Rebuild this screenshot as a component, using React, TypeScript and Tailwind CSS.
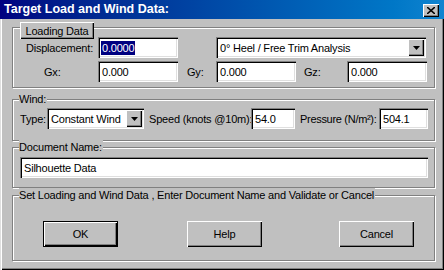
import React from "react";

const raised =
  "bg-[#c0c0c0] shadow-[inset_1px_1px_0_#ffffff,inset_-1px_-1px_0_#000000,inset_-2px_-2px_0_#808080]";
const sunken =
  "bg-white shadow-[inset_1px_1px_0_#808080,inset_2px_2px_0_#000000,inset_-1px_-1px_0_#ffffff,inset_-2px_-2px_0_#dfdfdf]";
const etched =
  "border border-[#808080] shadow-[inset_1px_1px_0_#ffffff,1px_1px_0_#ffffff]";

function Input({ value, w, selected }: { value: string; w: string; selected?: boolean }) {
  return (
    <div className={`${sunken} ${w} h-[21px] flex items-center pl-[3px] shrink-0 whitespace-nowrap`}>
      {selected ? (
        <span className="bg-[#000080] text-white leading-[14px] px-[1px]">{value}</span>
      ) : (
        <span className="leading-[14px] pl-[1px]">{value}</span>
      )}
    </div>
  );
}

function Arrow() {
  return (
    <div className={`${raised} w-[16px] h-[17px] flex items-center justify-center shrink-0`}>
      <svg width="7" height="4" viewBox="0 0 7 4">
        <path d="M0 0H7L3.5 4Z" fill="#000" />
      </svg>
    </div>
  );
}

function Select({ value, w }: { value: string; w: string }) {
  return (
    <div className={`${sunken} ${w} h-[21px] flex items-center pl-[3px] pr-[2px] shrink-0`}>
      <span className="flex-1 leading-[14px] pl-[1px] whitespace-nowrap overflow-hidden">{value}</span>
      <Arrow />
    </div>
  );
}

function Legend({ children }: { children: React.ReactNode }) {
  return (
    <div className="absolute left-[6px] top-[-8px] bg-[#c0c0c0] pr-[1px] leading-[14px] whitespace-nowrap">
      {children}
    </div>
  );
}

function Button({ label, def }: { label: string; def?: boolean }) {
  return (
    <div
      className={`${
        def
          ? "border border-black shadow-[inset_1px_1px_0_#ffffff,inset_-1px_-1px_0_#000000,inset_-2px_-2px_0_#808080]"
          : raised
      } w-[75px] h-[26px] flex items-center justify-center bg-[#c0c0c0] shrink-0`}
    >
      {label}
    </div>
  );
}

export default function App() {
  return (
    <div
      className="w-[444px] h-[270px] bg-[#c0c0c0] flex flex-col text-black text-[11px] tracking-[-0.2px] overflow-hidden"
      style={{ fontFamily: '"Liberation Sans", Arial, sans-serif' }}
    >
      {/* Title bar */}
      <div className="h-[19px] shrink-0 bg-gradient-to-r from-[#000080] to-[#1084d0] flex items-start justify-between pl-[4px] pr-[5px]">
        <span className="text-white font-bold text-[12.5px] leading-[19px] tracking-normal">
          Target Load and Wind Data:
        </span>
        <div className={`${raised} mt-[4px] w-[16px] h-[13px] flex items-center justify-center`}>
          <svg width="8" height="7" viewBox="0 0 8 7">
            <path d="M0 0L8 7M8 0L0 7" stroke="#000" strokeWidth="1.6" />
          </svg>
        </div>
      </div>

      {/* Body */}
      <div className="flex-1 flex flex-col pl-[12px] pr-[9px] shadow-[inset_1px_0_0_#dfdfdf,inset_2px_0_0_#ffffff,inset_-1px_-1px_0_#000000,inset_-2px_-2px_0_#808080]">
        {/* Loading Data group */}
        <div className={`relative mt-[8px] h-[61px] ${etched}`}>
          <div className={`${raised} absolute left-[7px] top-[-6px] w-[74px] h-[17px] flex items-center justify-center leading-[14px] whitespace-nowrap`}>
            Loading Data
          </div>
          <div className="flex flex-col gap-[3px] pt-[9px]">
            <div className="flex items-center">
              <div className="w-[85px] text-right pr-[5px] shrink-0 leading-[14px]">Displacement:</div>
              <Input value="0.0000" w="w-[80px]" selected />
              <div className="w-[38px] shrink-0" />
              <Select value="0° Heel / Free Trim Analysis" w="w-[210px]" />
            </div>
            <div className="flex items-center">
              <div className="w-[85px] pl-[31px] shrink-0 leading-[14px]">Gx:</div>
              <Input value="0.000" w="w-[80px]" />
              <div className="w-[38px] pl-[9px] shrink-0 leading-[14px]">Gy:</div>
              <Input value="0.000" w="w-[80px]" />
              <div className="w-[51px] pl-[8px] shrink-0 leading-[14px]">Gz:</div>
              <Input value="0.000" w="w-[80px]" />
            </div>
          </div>
        </div>

        {/* Wind group */}
        <div className={`relative mt-[11px] h-[42px] ${etched}`}>
          <Legend>Wind:</Legend>
          <div className="flex items-center pt-[8px] pl-[7px]">
            <div className="w-[27px] shrink-0 leading-[14px]">Type:</div>
            <Select value="Constant Wind" w="w-[97px]" />
            <div className="w-[107px] pl-[5px] shrink-0 leading-[14px] whitespace-nowrap">Speed (knots @10m):</div>
            <Input value="54.0" w="w-[44px]" />
            <div className="w-[84px] pl-[5px] shrink-0 leading-[14px] whitespace-nowrap tracking-[-0.3px]">Pressure (N/m²):</div>
            <Input value="504.1" w="w-[49px]" />
          </div>
        </div>

        {/* Document Name group */}
        <div className={`relative mt-[6px] h-[41px] ${etched}`}>
          <Legend>Document Name:</Legend>
          <div className="pt-[9px] pl-[7px]">
            <Input value="Silhouette Data" w="w-[408px]" />
          </div>
        </div>

        {/* Buttons group */}
        <div className={`relative mt-[7px] h-[66px] ${etched}`}>
          <Legend>Set Loading and Wind Data , Enter Document Name and Validate or Cancel</Legend>
          <div className="flex pt-[25px] pl-[30px] gap-[69px]">
            <Button label="OK" def />
            <Button label="Help" />
            <div className="ml-[8px]">
              <Button label="Cancel" />
            </div>
          </div>
        </div>
      </div>
    </div>
  );
}
